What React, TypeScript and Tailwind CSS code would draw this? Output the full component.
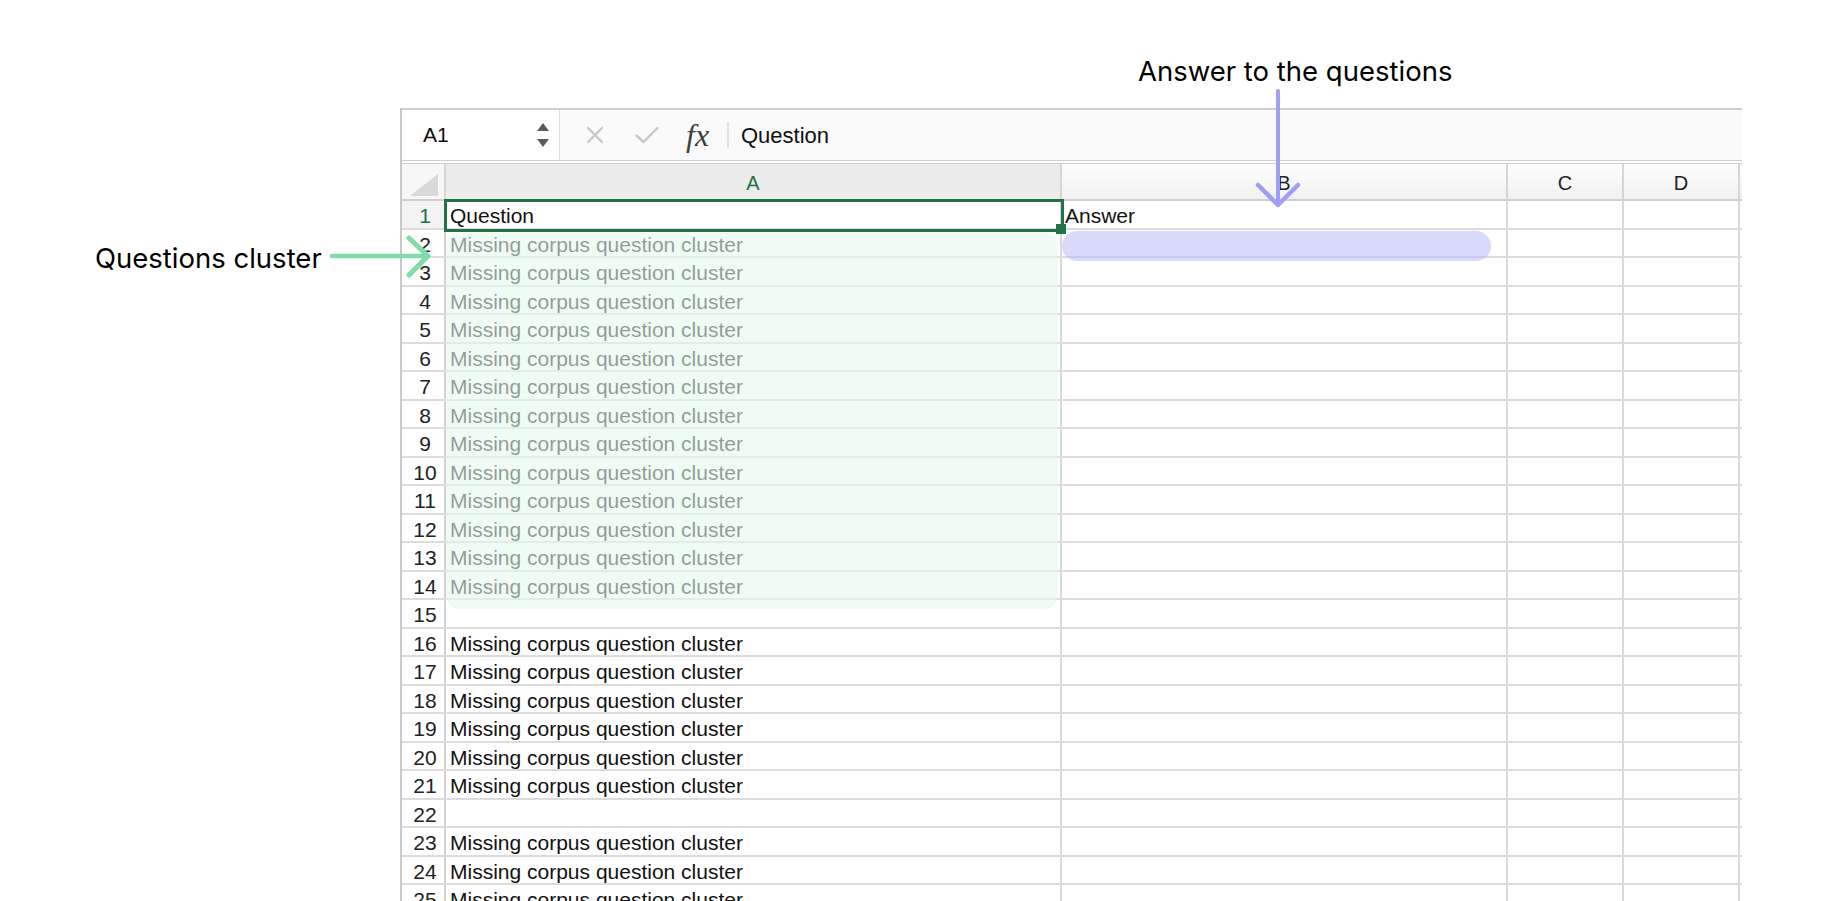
import React from "react";

const CELL = "Missing corpus question cluster";

type Row = { n: number; a: string; b?: string };

const rows: Row[] = [
  { n: 1, a: "Question", b: "Answer" },
  ...Array.from({ length: 13 }, (_, i) => ({ n: i + 2, a: CELL })),
  { n: 15, a: "" },
  ...Array.from({ length: 6 }, (_, i) => ({ n: i + 16, a: CELL })),
  { n: 22, a: "" },
  ...Array.from({ length: 4 }, (_, i) => ({ n: i + 23, a: CELL })),
];

function FormulaBar() {
  return (
    <div className="flex h-[53px] border-t-2 border-b border-[#cfcfcf] bg-[#fafafa]">
      <div className="relative flex w-[158px] items-center border-r border-[#dedede] bg-white pl-[21px]">
        <span className="text-[21px] text-[#111]">A1</span>
        <div className="absolute right-[10px] top-[13px] flex flex-col gap-[8px]">
          <svg width="12" height="8" viewBox="0 0 12 8">
            <path d="M6 0 L12 8 L0 8 Z" fill="#5b5b5b" />
          </svg>
          <svg width="12" height="8" viewBox="0 0 12 8">
            <path d="M0 0 L12 0 L6 8 Z" fill="#5b5b5b" />
          </svg>
        </div>
      </div>
      <div className="flex flex-1 items-center">
        <svg className="ml-[26px]" width="18" height="18" viewBox="0 0 18 18">
          <path d="M2 2 L16 16 M16 2 L2 16" stroke="#c8c8c8" strokeWidth="2.4" strokeLinecap="round" />
        </svg>
        <svg className="ml-[31px]" width="24" height="18" viewBox="0 0 24 18">
          <path d="M1.5 9.5 L8.5 16 L22.5 2" stroke="#c8c8c8" strokeWidth="2.4" fill="none" strokeLinecap="round" strokeLinejoin="round" />
        </svg>
        <span className="ml-[27px] inline-block w-[30px] font-['Liberation_Serif',serif] text-[32px] italic leading-none text-[#3f3f3f]">
          fx
        </span>
        <div className="ml-[11px] h-[26px] w-[2px] bg-[#e2e2e2]" />
        <span className="ml-[12px] text-[22px] text-[#111]">Question</span>
      </div>
    </div>
  );
}

function HeaderRow() {
  const hdr = "flex items-center justify-center border-r-2 border-[#d6d6d6] pt-[2px] text-[20px]";
  return (
    <div className="flex h-[38px] border-t border-b-2 border-[#cfcfcf] bg-gradient-to-b from-[#fdfdfd] to-[#f1f1f1]">
      <div className="relative w-[44px] border-r-2 border-[#d6d6d6] bg-[#f7f7f7]">
        <svg className="absolute bottom-[3px] right-[6px]" width="28" height="22" viewBox="0 0 28 22">
          <path d="M28 0 L28 22 L0 22 Z" fill="#d9d9d9" />
        </svg>
      </div>
      <div className={`${hdr} w-[616px] bg-[#ececec] text-[#217346]`}>A</div>
      <div className={`${hdr} w-[446px] text-[#222]`}>B</div>
      <div className={`${hdr} w-[116px] text-[#222]`}>C</div>
      <div className={`${hdr} w-[116px] text-[#222]`}>D</div>
      <div className="flex-1" />
    </div>
  );
}

function SheetRow({ r }: { r: Row }) {
  const cell = "flex items-center border-r-2 border-[#dadada] whitespace-nowrap pt-[3px]";
  return (
    <div className="flex h-[28.5px] border-b-2 border-[#dcdcdc] text-[21px] leading-none">
      <div
        className={`flex w-[44px] items-center justify-center border-r-2 border-[#d2d2d2] pl-[4px] pt-[3px] ${
          r.n === 1 ? "bg-[#f3f3f3] text-[#217346]" : "bg-white text-[#222]"
        }`}
      >
        {r.n}
      </div>
      <div className={`${cell} relative w-[616px] pl-[4px] text-[#111]`}>
        {r.a}
        {r.n === 1 && (
          <>
            <div className="absolute -left-[2px] -top-[2px] z-10 h-[33px] w-[620px] border-[3px] border-[#217346]" />
            <div className="absolute -bottom-[6px] -right-[6px] z-10 h-[10px] w-[10px] bg-[#217346]" />
          </>
        )}
      </div>
      <div className={`${cell} w-[446px] overflow-hidden pl-[3px] text-[#111]`}>{r.b ?? ""}</div>
      <div className={`${cell} w-[116px]`} />
      <div className={`${cell} w-[116px]`} />
      <div className="flex-1" />
    </div>
  );
}

export default function App() {
  return (
    <div className="relative h-[901px] w-[1834px] overflow-hidden bg-white font-['Liberation_Sans',Arial,sans-serif]">
      <div className="ml-[400px] mt-[108px] w-[1342px] overflow-hidden border-l-2 border-[#c9c9c9]">
        <FormulaBar />
        <div className="h-[2px] bg-white" />
        <HeaderRow />
        {rows.map((r) => (
          <SheetRow key={r.n} r={r} />
        ))}
      </div>

      {/* cluster highlight */}
      <div className="absolute left-[446px] top-[233px] h-[376px] w-[612px] rounded-[14px] bg-[rgba(228,250,236,0.6)]" />
      {/* answer highlight */}
      <div className="absolute left-[1062px] top-[231px] h-[30px] w-[429px] rounded-full bg-[rgba(185,185,250,0.55)]" />

      {/* annotations */}
      <div className="absolute left-[1138px] top-[54px] font-['Inter',sans-serif] text-[27.5px] leading-[34px] text-black">
        Answer to the questions
      </div>
      <div className="absolute left-[95px] top-[241px] font-['Inter',sans-serif] text-[27.5px] leading-[34px] text-black">
        Questions cluster
      </div>

      <svg className="absolute left-[1250px] top-[88px]" width="56" height="124" viewBox="0 0 56 124">
        <path d="M28 3 L28 116" stroke="#a09ef8" strokeWidth="4" strokeLinecap="round" />
        <path d="M8 97 L28 117 L48 97" stroke="#a09ef8" strokeWidth="4.5" fill="none" strokeLinecap="round" strokeLinejoin="round" />
      </svg>

      <svg className="absolute left-[326px] top-[230px]" width="110" height="52" viewBox="0 0 110 52">
        <path d="M6 26 L100 26" stroke="#80dca8" strokeWidth="4.5" strokeLinecap="round" />
        <path d="M83 8 L102 26 L83 45" stroke="#80dca8" strokeWidth="5" fill="none" strokeLinecap="round" strokeLinejoin="round" />
      </svg>
    </div>
  );
}
